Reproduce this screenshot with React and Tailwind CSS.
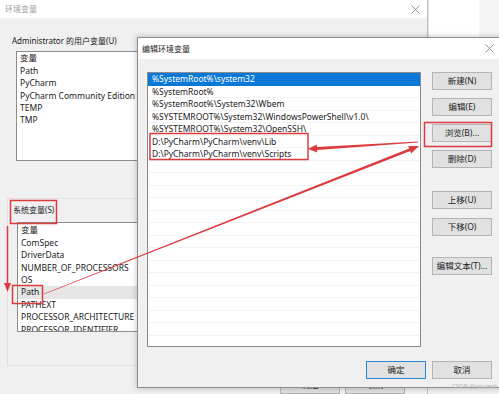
const userVars = ["变量", "Path", "PyCharm", "PyCharm Community Edition", "TEMP", "TMP"];
const sysVars = [
  "变量",
  "ComSpec",
  "DriverData",
  "NUMBER_OF_PROCESSORS",
  "OS",
  "Path",
  "PATHEXT",
  "PROCESSOR_ARCHITECTURE",
  "PROCESSOR_IDENTIFIER",
];
const pathItems = [
  "%SystemRoot%\\system32",
  "%SystemRoot%",
  "%SystemRoot%\\System32\\Wbem",
  "%SYSTEMROOT%\\System32\\WindowsPowerShell\\v1.0\\",
  "%SYSTEMROOT%\\System32\\OpenSSH\\",
  "D:\\PyCharm\\PyCharm\\venv\\Lib",
  "D:\\PyCharm\\PyCharm\\venv\\Scripts",
];

const font = { fontFamily: '"Noto Sans", "Noto Sans CJK SC", sans-serif' };

const WinButton = ({ children, primary }) => (
  <div
    className={
      "w-[60px] h-[18px] flex items-center justify-center bg-[#e1e1e1] border text-[8.5px] leading-none text-[#222] whitespace-nowrap " +
      (primary ? "border-[#2b86d6]" : "border-[#b4b4b4]")
    }
  >
    {children}
  </div>
);

const CloseX = ({ className }) => (
  <svg className={className} width="9" height="9" viewBox="0 0 9 9">
    <path d="M0.5 0.5 L8.5 8.5 M8.5 0.5 L0.5 8.5" stroke="#8a8a8a" strokeWidth="0.9" />
  </svg>
);

// 背景窗口：环境变量
const EnvWindow = () => (
  <div className="w-[428px] h-full flex flex-col bg-[#f0f0f0] border-r border-[#bdbdbd]">
    <div className="h-[19px] bg-white flex items-center justify-between pl-[5px] pr-[7px]">
      <span className="text-[8px] text-[#a0a0a0] leading-none">环境变量</span>
      <CloseX />
    </div>
    <div className="pl-[12px] pt-[17px]">
      <div className="h-[12px] text-[8px] leading-[12px] text-[#1a1a1a]">Administrator 的用户变量(U)</div>
      <div className="ml-[4px] mt-[4px] w-[398px] h-[110px] bg-white border border-[#8c8c8c]">
        {userVars.map((v) => (
          <div key={v} className="h-[12.4px] pl-[3px] text-[8.5px] leading-[12.4px] text-[#1a1a1a] whitespace-nowrap">
            {v}
          </div>
        ))}
      </div>
    </div>
    {/* 系统变量区域 */}
    <div className="ml-[7px] mt-[37px] h-[173px] border-l border-t border-b border-[#e0e0e0] pl-[5px] pt-[5px]">
      <div className="h-[12px] text-[8px] leading-[12px] text-[#1a1a1a]">系统变量(S)</div>
      <div className="ml-[4px] mt-[6px] w-[398px] h-[110px] bg-white border border-[#8c8c8c] pt-[1px] overflow-hidden">
        {sysVars.map((v) => (
          <div
            key={v}
            className={
              "h-[12.4px] pl-[3px] text-[8.5px] leading-[12.4px] text-[#1a1a1a] whitespace-nowrap " +
              (v === "Path" ? "bg-[#e6e6e6]" : "")
            }
          >
            {v}
          </div>
        ))}
      </div>
    </div>
    <div className="flex gap-[5px] pl-[280px] mt-[10px]">
      <WinButton>确定</WinButton>
      <div className="w-[62px]">
        <WinButton>取消</WinButton>
      </div>
    </div>
  </div>
);

// 编辑环境变量对话框
const EditDialog = () => {
  const rows = [...pathItems, ...Array(15).fill("")];
  return (
    <div className="absolute left-[137px] top-[37px] w-[370px] h-[351px] bg-[#f0f0f0] border border-[#8e8e8e] shadow-[0_0_6px_rgba(0,0,0,0.25)] flex flex-col">
      <div className="h-[21px] bg-white flex items-center justify-between pl-[4px] pr-[12px]">
        <span className="text-[8px] leading-none text-[#1a1a1a]">编辑环境变量</span>
        <CloseX />
      </div>
      <div className="flex pl-[9px] pt-[13px]">
        <div className="w-[274px] h-[275px] bg-white border border-[#8c8c8c] overflow-hidden">
          {rows.map((r, i) => (
            <div
              key={i}
              className={
                "h-[12.5px] pl-[4px] text-[8.5px] leading-[12.5px] whitespace-nowrap " +
                (i === 0 ? "bg-[#0a78d7] text-white" : "text-[#1a1a1a] border-b border-[#f3f3f3]")
              }
            >
              {r}
            </div>
          ))}
        </div>
        <div className="ml-[11px] flex flex-col">
          <WinButton>新建(N)</WinButton>
          <div className="mt-[8px]"><WinButton>编辑(E)</WinButton></div>
          <div className="mt-[8px]"><WinButton>浏览(B)...</WinButton></div>
          <div className="mt-[8px]"><WinButton>删除(D)</WinButton></div>
          <div className="mt-[23px]"><WinButton>上移(U)</WinButton></div>
          <div className="mt-[9px]"><WinButton>下移(O)</WinButton></div>
          <div className="mt-[21px]"><WinButton>编辑文本(T)...</WinButton></div>
        </div>
      </div>
      <div className="flex justify-end gap-[6px] pr-[14px] mt-[14px]">
        <WinButton primary>确定</WinButton>
        <WinButton>取消</WinButton>
      </div>
    </div>
  );
};

// 红色标注
const Annotations = () => (
  <svg className="absolute inset-0 pointer-events-none" width="499" height="394" viewBox="0 0 499 394">
    <g fill="none" stroke="#dc3b3f" strokeWidth="1.5">
      <rect x="10.5" y="200.5" width="46" height="23" />
      <rect x="12.5" y="285.5" width="30" height="18" />
      <rect x="150" y="133.5" width="158" height="26" />
      <rect x="424.5" y="122.5" width="67" height="24" />
      <line x1="7.5" y1="226" x2="7.5" y2="285" />
    </g>
    <g fill="#dc3b3f">
      <polygon points="4,283 11,283 7.5,292" />
      <polygon points="43.85,293.63 409.2,148.5 408.2,146 419,146 411.2,153.4 410.2,150.9 44.15,294.37" />
      <polygon points="417.97,141.6 316.9,146.9 316.75,144.4 308,149 317.25,152.4 317.1,149.9 418.03,142.4" />
    </g>
  </svg>
);

export default function App() {
  return (
    <div className="relative w-[499px] h-[394px] overflow-hidden bg-white" style={font}>
      <div className="flex h-full">
        <EnvWindow />
        <div className="flex-1 flex flex-col">
          <div className="h-[37px] flex">
            <div className="w-[51px] bg-white border-l border-[#e4e4e4]" />
            <div className="flex-1 bg-[#f5f5f5]" />
          </div>
          <div className="flex-1 bg-[#f0f0f0]" />
        </div>
      </div>
      <EditDialog />
      <Annotations />
      <div className="absolute left-[452px] top-[383px] text-[6px] leading-none text-[#b0b0b0]">CSDN @yourenk</div>
    </div>
  );
}
